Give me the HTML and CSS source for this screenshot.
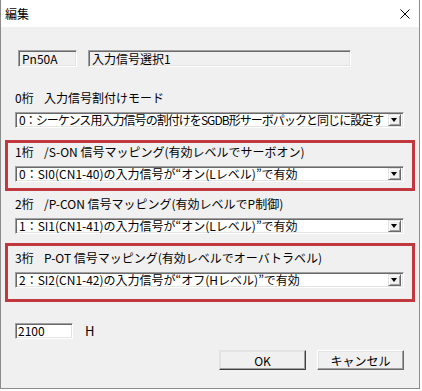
FILE: index.html
```html
<!DOCTYPE html>
<html lang="ja">
<head>
    <meta charset="UTF-8">
    <title>編集</title>
    <link rel="stylesheet" href="styles.css">
</head>
<body>
    <div class="dialog">
        <div class="titlebar">
            <span class="title">編集</span>
            <svg class="close" width="10" height="10" viewBox="0 0 10 10">
                <path d="M0.5 0.5 L9.5 9.5 M9.5 0.5 L0.5 9.5" stroke="#000" stroke-width="1" fill="none"/>
            </svg>
        </div>

        <div class="client">
            <div class="param-row">
                <div class="field readonly param-no">Pn50A</div>
                <div class="field readonly param-name">入力信号選択1</div>
            </div>

            <div class="group g0">
                <div class="label"><span class="digit">0桁</span>入力信号割付けモード</div>
                <div class="combo">
                    <span class="combo-text tight">0：シーケンス用入力信号の割付けをSGDB形サーボパックと同じに設定す</span>
                    <span class="drop"></span>
                </div>
            </div>

            <div class="group g1 marked">
                <div class="label"><span class="digit">1桁</span>/S-ON 信号マッピング(有効レベルでサーボオン)</div>
                <div class="combo">
                    <span class="combo-text">0：SI0(CN1-40)の入力信号が“オン(Lレベル)”で有効</span>
                    <span class="drop"></span>
                </div>
            </div>

            <div class="group g2">
                <div class="label"><span class="digit">2桁</span>/P-CON 信号マッピング(有効レベルでP制御)</div>
                <div class="combo">
                    <span class="combo-text">1：SI1(CN1-41)の入力信号が“オン(Lレベル)”で有効</span>
                    <span class="drop"></span>
                </div>
            </div>

            <div class="group g3 marked">
                <div class="label"><span class="digit">3桁</span>P-OT 信号マッピング(有効レベルでオーバトラベル)</div>
                <div class="combo">
                    <span class="combo-text">2：SI2(CN1-42)の入力信号が“オフ(Hレベル)”で有効</span>
                    <span class="drop"></span>
                </div>
            </div>

            <div class="value-row">
                <div class="field value">2100</div>
                <span class="unit">H</span>
            </div>

            <div class="buttons">
                <button class="btn default">OK</button>
                <button class="btn">キャンセル</button>
            </div>
        </div>
    </div>
</body>
</html>
```

FILE: styles.css
```css
body { margin: 0; background: #fff; font-family: "Noto Sans CJK JP", "Noto Sans", sans-serif; font-size: 12px; color: #000; }

.dialog { width: 418px; height: 388px; border: 1px solid #8c8c8c; border-top: none; display: flex; flex-direction: column; }
.titlebar { height: 27px; background: #fff; display: flex; align-items: center; justify-content: space-between; padding: 0 9px 0 4px; }
.title { font-size: 12px; line-height: 14px; }
.client { flex: 1; background: #f0f0f0; padding-top: 23px; }

/* sunken 3d edge */
.field, .combo {
    box-sizing: border-box;
    border: 1px solid;
    border-color: #a0a0a0 #fff #fff #a0a0a0;
    box-shadow: inset 1px 1px #696969, inset -1px -1px #e3e3e3;
}

.param-row { display: flex; gap: 11px; padding-left: 17px; }
.field { height: 17px; line-height: 15px; padding-left: 3px; white-space: nowrap; }
.readonly { background: #f0f0f0; }
.param-no { width: 59px; }
.param-name { width: 263px; }

.group { margin: 0 4px; border: 3px solid transparent; padding: 1px 8px 6px 7px; }
.group.marked { border-color: #c1393e; }
.g0 { margin-top: 19px; }
.g1 { margin-top: 3px; }
.g2 { margin-top: 1px; }
.g3 { padding-top: 4px; padding-bottom: 11px; }

.label { height: 16px; line-height: 16px; margin-bottom: 6px; display: flex; white-space: nowrap; }
.digit { width: 29px; flex: none; }

.combo { height: 16px; background: #fff; display: flex; align-items: center; padding: 0 2px 0 2px; }
.combo-text { flex: 1; min-width: 0; white-space: nowrap; line-height: 14px; padding-left: 1px; }
.combo-text.tight { letter-spacing: -0.95px; }
.drop {
    flex: none; width: 13px; height: 12px; box-sizing: border-box; position: relative;
    background: #f0f0f0; border: 1px solid; border-color: #e3e3e3 #696969 #696969 #e3e3e3;
    box-shadow: inset 1px 1px #fff, inset -1px -1px #a0a0a0;
}
.drop::after {
    content: ""; position: absolute; left: 2px; top: 3px;
    border-left: 3.5px solid transparent; border-right: 3.5px solid transparent; border-top: 4px solid #000;
}

.value-row { display: flex; align-items: center; margin-top: 19px; padding-left: 14px; }
.value { width: 58px; height: 16px; line-height: 14px; background: #fff; padding-left: 2px; }
.unit { margin-left: 12px; font-size: 13px; }

.buttons { display: flex; justify-content: flex-end; gap: 11px; margin-top: 10px; padding-right: 15px; }
.btn {
    width: 87px; height: 20px; padding: 0; margin: 0;
    font-family: inherit; font-size: 12px; color: #000; background: #f0f0f0;
    border: 1px solid; border-color: #fff #696969 #696969 #fff;
    box-shadow: inset -1px -1px #a0a0a0, inset 1px 1px #e3e3e3;
}
.btn.default { border-color: #e3e3e3 #404040 #404040 #e3e3e3; }
```
